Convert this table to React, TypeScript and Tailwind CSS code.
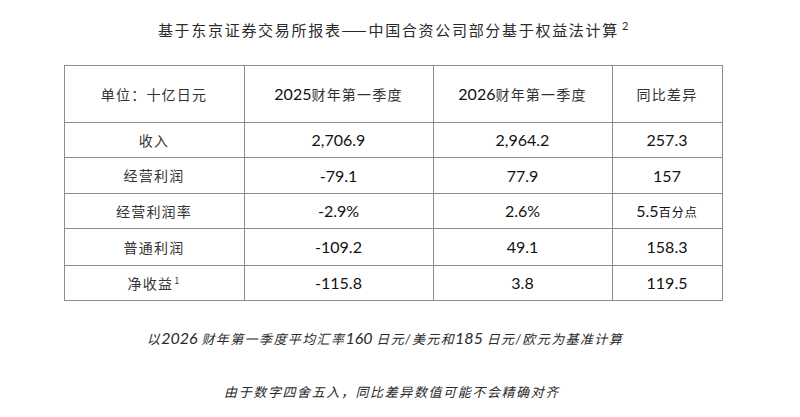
import React from 'react';

type Row = { label: React.ReactNode; a: string; b: string; c: React.ReactNode; h: string };

const rows: Row[] = [
  { label: '收入', a: '2,706.9', b: '2,964.2', c: '257.3', h: 'h-[35px]' },
  { label: '经营利润', a: '-79.1', b: '77.9', c: '157', h: 'h-[36px]' },
  {
    label: '经营利润率',
    a: '-2.9%',
    b: '2.6%',
    c: (
      <>
        5.5<span className="text-[12px] tracking-[1px] font-['Noto_Sans_CJK_SC',sans-serif]">百分点</span>
      </>
    ),
    h: 'h-[35px]',
  },
  { label: '普通利润', a: '-109.2', b: '49.1', c: '158.3', h: 'h-[37px]' },
  {
    label: (
      <>
        净收益<sup className="text-[9px] -top-[5px] ml-[1px]">1</sup>
      </>
    ),
    a: '-115.8',
    b: '3.8',
    c: '119.5',
    h: 'h-[35px]',
  },
];

const cell = 'border border-[#8c8c8c] text-center align-middle p-0';
const cjkCell = `${cell} font-normal text-[14px] tracking-[1.2px] text-[#333] font-['Noto_Sans_CJK_SC',sans-serif]`;
const numCell = `${cell} font-normal text-[16px] text-[#111] font-['Lato','Noto_Sans_CJK_SC',sans-serif]`;
const cjkSpan = "text-[14px] tracking-[1.2px] text-[#333] font-['Noto_Sans_CJK_SC',sans-serif]";
const numSpan = "text-[16px] tracking-normal italic font-['Lato',sans-serif]";

export default function App() {
  return (
    <div className="w-[800px] h-[417px] bg-white flex flex-col items-center text-[#1e1e1e]">
      <h1 className="pt-[21px] leading-[18px] text-[15px] font-normal tracking-[1.7px] text-[#2a2a2a] ml-[-12px] font-['Noto_Sans_CJK_SC',sans-serif]">
        基于东京证券交易所报表——中国合资公司部分基于权益法计算
        <sup className="text-[11px] -top-[6px] ml-[3px] font-['Lato',sans-serif]">2</sup>
      </h1>

      <table className="mt-[26px] border-collapse table-fixed w-[658px] ml-[-14px]">
        <colgroup>
          <col className="w-[180px]" />
          <col className="w-[189px]" />
          <col className="w-[179px]" />
          <col className="w-[110px]" />
        </colgroup>
        <thead>
          <tr className="h-[57px]">
            <th className={cjkCell}>单位：十亿日元</th>
            <th className={numCell}>
              2025<span className={cjkSpan}>财年第一季度</span>
            </th>
            <th className={numCell}>
              2026<span className={cjkSpan}>财年第一季度</span>
            </th>
            <th className={cjkCell}>同比差异</th>
          </tr>
        </thead>
        <tbody>
          {rows.map((r, i) => (
            <tr key={i} className={r.h}>
              <td className={cjkCell}>{r.label}</td>
              <td className={numCell}>{r.a}</td>
              <td className={numCell}>{r.b}</td>
              <td className={numCell}>{r.c}</td>
            </tr>
          ))}
        </tbody>
      </table>

      <p className="mt-[27px] leading-[20px] italic text-[13px] tracking-[1.4px] text-[#2a2a2a] ml-[-30px] font-['Noto_Sans_CJK_SC',sans-serif]">
        以<span className={numSpan}>2026 </span>
        财年第一季度平均汇率
        <span className={numSpan}>160 </span>
        日元<span className="font-['Lato',sans-serif]">/</span>美元和
        <span className={numSpan}>185 </span>
        日元<span className="font-['Lato',sans-serif]">/</span>欧元为基准计算
      </p>

      <p className="mt-[33px] leading-[20px] italic text-[13px] tracking-[1.6px] text-[#2a2a2a] ml-[-16px] font-['Noto_Sans_CJK_SC',sans-serif]">
        由于数字四舍五入，同比差异数值可能不会精确对齐
      </p>
    </div>
  );
}
